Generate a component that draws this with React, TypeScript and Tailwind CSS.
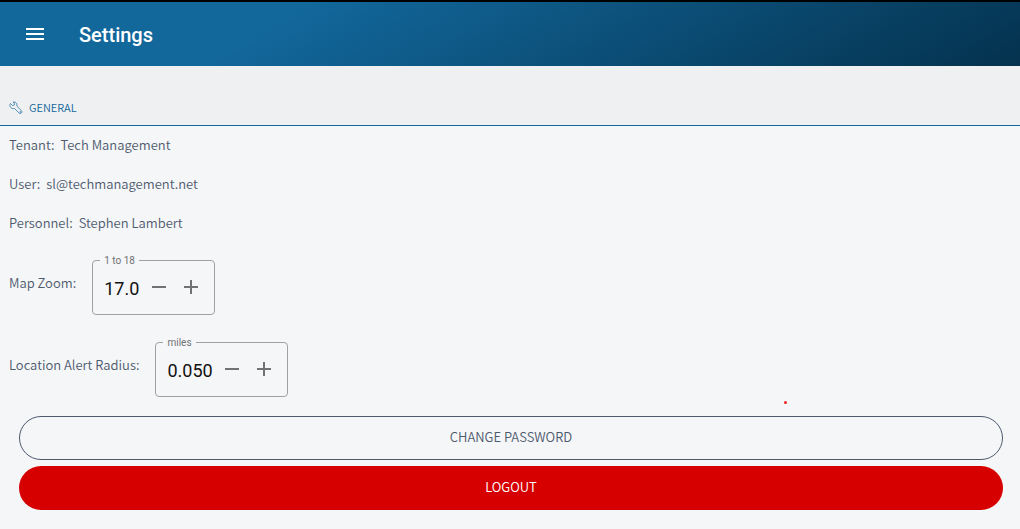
import { useState } from "react";

type StepperProps = {
  id: string;
  label: string;
  legend: string;
  initial: number;
  step: number;
  digits: number;
  min: number;
  max: number;
  inputWidth: string;
};

function Stepper({ id, label, legend, initial, step, digits, min, max, inputWidth }: StepperProps) {
  const [value, setValue] = useState(initial.toFixed(digits));
  const change = (delta: number) =>
    setValue((v) => Math.min(max, Math.max(min, (Number(v) || 0) + delta)).toFixed(digits));

  return (
    <div className="flex items-center gap-4">
      <label htmlFor={id} className="pb-[2px]">{label}</label>
      <fieldset className="h-[62px] rounded border border-[#9fa1a3] px-[7px] font-['Roboto',sans-serif] font-normal">
        <legend className="px-1 pt-[2px] text-[10px] leading-3 text-[#707274]">{legend}</legend>
        <div className="flex h-10 items-center">
          <input
            id={id}
            type="text"
            inputMode="decimal"
            value={value}
            onChange={(e) => setValue(e.target.value)}
            className={`${inputWidth} ml-1 bg-transparent pt-1 text-lg text-[#111] outline-none`}
          />
          <button type="button" aria-label={`Decrease ${label}`} onClick={() => change(-step)} className="flex size-8 items-center justify-center text-[#707274]">
            <svg viewBox="0 0 14 14" className="size-[14px]" aria-hidden="true"><path d="M0 7h14" stroke="currentColor" strokeWidth="2" /></svg>
          </button>
          <button type="button" aria-label={`Increase ${label}`} onClick={() => change(step)} className="flex size-8 items-center justify-center text-[#707274]">
            <svg viewBox="0 0 14 14" className="size-[14px]" aria-hidden="true"><path d="M0 7h14M7 0v14" stroke="currentColor" strokeWidth="2" /></svg>
          </button>
        </div>
      </fieldset>
    </div>
  );
}

function Detail({ name, value }: { name: string; value: string }) {
  return (
    <div className="flex h-[39px] items-center gap-[6px] pb-[2px]">
      <dt>{name}</dt>
      <dd>{value}</dd>
    </div>
  );
}

export default function App() {
  return (
    <div className="min-h-screen bg-[#f5f6f8] font-['Noto_Sans_CJK_SC',sans-serif] text-[13px] leading-5 font-[350] text-[#4d5a6d]">
      <header className="flex h-[66px] items-center border-t-2 border-black bg-[linear-gradient(150deg,#12679b_28%,#04324e_100%)] pl-[26px] font-['Roboto',sans-serif] text-white">
        <button type="button" aria-label="Open menu">
          <svg viewBox="0 0 18 12" className="h-3 w-[18px]" aria-hidden="true"><path d="M0 1h18M0 6h18M0 11h18" stroke="currentColor" strokeWidth="2" /></svg>
        </button>
        <h1 className="pt-[2px] pl-[35px] text-xl leading-6 font-medium">Settings</h1>
      </header>
      <main>
        <div className="flex h-[60px] items-end border-b border-[#12679b] bg-[#eff0f2] pb-2 pl-[9px] text-[#12679b]">
          <h2 className="flex items-center gap-[6px] text-[11px] font-[350]">
            <svg viewBox="0 0 14 14" className="mt-[2px] size-[14px]" fill="none" stroke="currentColor" strokeWidth="0.7" strokeLinejoin="round" aria-hidden="true">
              <path d="M1.500 2.500 3.500 4.500 5.300 4 5.500 2.200 4 1.200C6.500 .3 8.500 2.500 7.800 5L12.500 9.700C13.800 11.300 12 13.300 10.300 12.200L5.500 7.500C3 8.300.2 6 1 3.500Z" />
              <circle cx="11.200" cy="11" r="0.400" />
            </svg>
            GENERAL
          </h2>
        </div>
        <dl className="px-[9px]">
          <Detail name="Tenant:" value="Tech Management" />
          <Detail name="User:" value="sl@techmanagement.net" />
          <Detail name="Personnel:" value="Stephen Lambert" />
        </dl>
        <div className="flex flex-col gap-5 px-[9px] pt-[10px]">
          <Stepper id="map-zoom" label="Map Zoom:" legend="1 to 18" initial={17} step={1} digits={1} min={1} max={18} inputWidth="w-[39px]" />
          <Stepper id="alert-radius" label="Location Alert Radius:" legend="miles" initial={0.05} step={0.01} digits={3} min={0} max={10} inputWidth="w-[49px]" />
        </div>
        <div className="relative flex flex-col gap-[6px] pt-[19px] pr-[17px] pb-[19px] pl-[19px]">
          <span className="absolute top-1 left-[77%] -ml-px size-[3px] rounded-full bg-[#f02020]" aria-hidden="true" />
          <button type="button" className="h-11 rounded-full border border-[#4d5a6d] pb-[2px]">CHANGE PASSWORD</button>
          <button type="button" className="h-11 rounded-full bg-[#d60000] pb-[2px] text-white">LOGOUT</button>
        </div>
      </main>
    </div>
  );
}
